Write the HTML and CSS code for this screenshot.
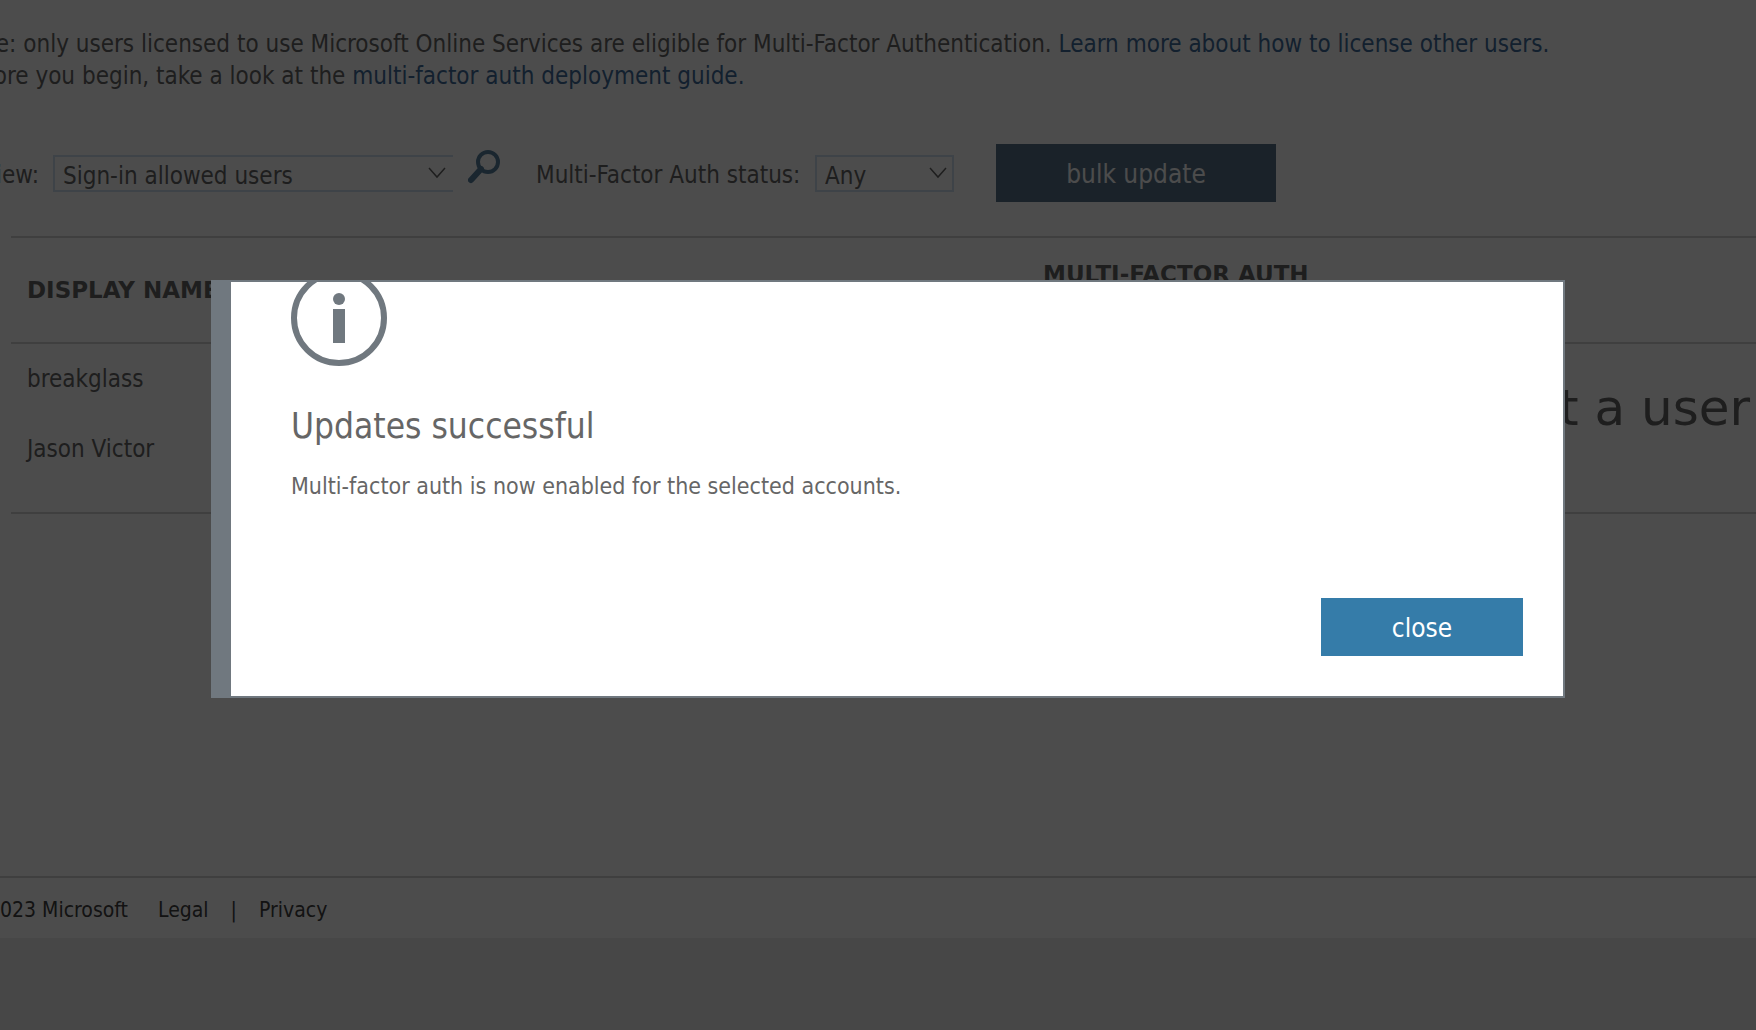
FILE: index.html
```html
<!DOCTYPE html>
<html lang="en">
<head>
<meta charset="utf-8">
<title>Multi-factor authentication</title>
<link rel="stylesheet" href="styles.css">
</head>
<body>
<div class="page">
  <main class="content">
    <p class="note">Note: only users licensed to use Microsoft Online Services are eligible for Multi-Factor Authentication. <a href="#license">Learn more about how to license other users.</a><br>Before you begin, take a look at the <a href="#guide">multi-factor auth deployment guide.</a></p>

    <form class="filters">
      <label class="view-label" for="view">View:</label>
      <span class="select-box view-box">
        <select id="view"><option>Sign-in allowed users</option></select>
        <svg class="chevron" viewBox="0 0 18 12" aria-hidden="true"><path d="M1 1l8 9 8-9"/></svg>
      </span>
      <button class="search" type="button" aria-label="Search">
        <svg viewBox="0 0 32 34" aria-hidden="true"><circle cx="20" cy="12" r="10"/><path class="handle" d="M13 19L3 30"/></svg>
      </button>
      <label class="status-label" for="status">Multi-Factor Auth status:</label>
      <span class="select-box status-box">
        <select id="status"><option>Any</option></select>
        <svg class="chevron" viewBox="0 0 18 12" aria-hidden="true"><path d="M1 1l8 9 8-9"/></svg>
      </span>
      <button class="button bulk" type="button">bulk update</button>
    </form>

    <table class="users">
      <thead>
        <tr><th class="name">DISPLAY NAME</th><th class="status">MULTI-FACTOR AUTH<br>STATUS</th><th></th></tr>
      </thead>
      <tbody>
        <tr><td>breakglass</td><td></td><td class="prompt" rowspan="2">Select a user</td></tr>
        <tr><td>Jason Victor</td><td></td></tr>
      </tbody>
    </table>
  </main>

  <footer class="footer">
    <span class="copyright">©2023 Microsoft</span>
    <a href="#legal">Legal</a>
    <span>|</span>
    <a href="#privacy">Privacy</a>
  </footer>
</div>

<div class="overlay">
  <section class="dialog" role="dialog" aria-modal="true" aria-labelledby="dialog-title">
    <svg class="info" viewBox="0 0 96 96" aria-hidden="true"><circle class="ring" cx="48" cy="48" r="45"/><circle cx="48" cy="29" r="6"/><path d="M42 39h12v34H42z"/></svg>
    <h1 id="dialog-title">Updates successful</h1>
    <p>Multi-factor auth is now enabled for the selected accounts.</p>
    <button class="button close" type="button">close</button>
  </section>
</div>
</body>
</html>
```

FILE: styles.css
```css
* { box-sizing: border-box; }

body {
  margin: 0;
  overflow: hidden;
  background: #ededed;
  color: #666;
  font: 24px/32px "DejaVu Sans Condensed", "DejaVu Sans", sans-serif;
}

a { color: #406d9c; text-decoration: none; }

.page {
  margin-left: -42px;
  background: #fff;
}

.content { min-height: 876px; padding-top: 28px; }

.note { margin: 0; white-space: nowrap; }

.filters {
  display: flex;
  align-items: center;
  height: 58px;
  margin-top: 52px;
  white-space: nowrap;
}

.filters label { padding-top: 3px; }
.filters .view-label { width: 95px; padding-right: 14px; text-align: right; }

.select-box {
  display: grid;
  height: 37px;
  align-items: center;
}

.select-box select,
.chevron { grid-area: 1 / 1; }

.select-box select {
  width: 100%;
  height: 37px;
  padding: 3px 8px 0;
  border: 2px solid #cfe2f2;
  border-radius: 0;
  background: #fff;
  color: #666;
  font: inherit;
  appearance: none;
}

.view-box { width: 400px; }
.view-box select { border-right: 0; }
.status-box { width: 139px; margin-right: 42px; }

.chevron {
  width: 18px;
  height: 12px;
  margin-right: 7px;
  justify-self: end;
  fill: none;
  stroke: #666;
  stroke-width: 1.5;
  pointer-events: none;
}

.search {
  width: 32px;
  height: 34px;
  margin: 0 36px 12px 15px;
  padding: 0;
  border: 0;
  background: none;
}

.search svg { display: block; width: 32px; height: 34px; fill: none; stroke: #57809f; stroke-width: 4; }
.search .handle { stroke-width: 6; stroke-linecap: round; }

.status-label { width: 279px; }

.button {
  height: 58px;
  padding: 2px 0 0;
  border: 0;
  color: #fff;
  font: inherit;
  font-size: 26px;
}

.bulk { width: 280px; background: #57738a; }

.users {
  width: calc(100% - 53px);
  margin: 34px 0 0 53px;
  padding-bottom: 28px;
  border: solid #d2d2d2;
  border-width: 2px 0;
  border-spacing: 0;
  table-layout: fixed;
}

.users th {
  height: 106px;
  padding: 0 16px;
  border-bottom: 2px solid #d2d2d2;
  font: bold 23px/32px "DejaVu Sans", sans-serif;
  text-align: left;
}

.users .name { width: 1016px; }
.users .status { width: 352px; }
.users td { height: 70px; padding: 0 16px; }

.users .prompt {
  padding: 0 6px 12px 0;
  font: 50px/56px "DejaVu Sans", sans-serif;
  text-align: right;
  white-space: nowrap;
}

.footer {
  display: flex;
  height: 62px;
  align-items: center;
  gap: 22px;
  padding-top: 4px;
  border-top: 2px solid #d2d2d2;
  color: #404040;
  font-size: 21px;
}

.footer a { color: #404040; }
.copyright { width: 170px; margin-right: 8px; text-align: right; }

.overlay {
  position: fixed;
  inset: 0;
  display: flex;
  align-items: flex-start;
  padding: 280px 191px 0 211px;
  background: rgba(0, 0, 0, 0.7);
}

.dialog {
  display: flex;
  flex: 1;
  flex-direction: column;
  overflow: hidden;
  padding: 0 40px 40px 60px;
  border: 2px solid #70787f;
  border-left-width: 20px;
  background: #fff;
}

.info { width: 96px; height: 96px; margin-top: -12px; fill: #70787f; }
.info .ring { fill: none; stroke: #70787f; stroke-width: 6; }

.dialog h1 { margin: 36px 0 0; font-size: 35px; font-weight: normal; line-height: 48px; }
.dialog p { margin: 20px 0 0; font-size: 23px; }

.close { align-self: flex-end; width: 202px; margin-top: 96px; background: #357ca9; }
```
